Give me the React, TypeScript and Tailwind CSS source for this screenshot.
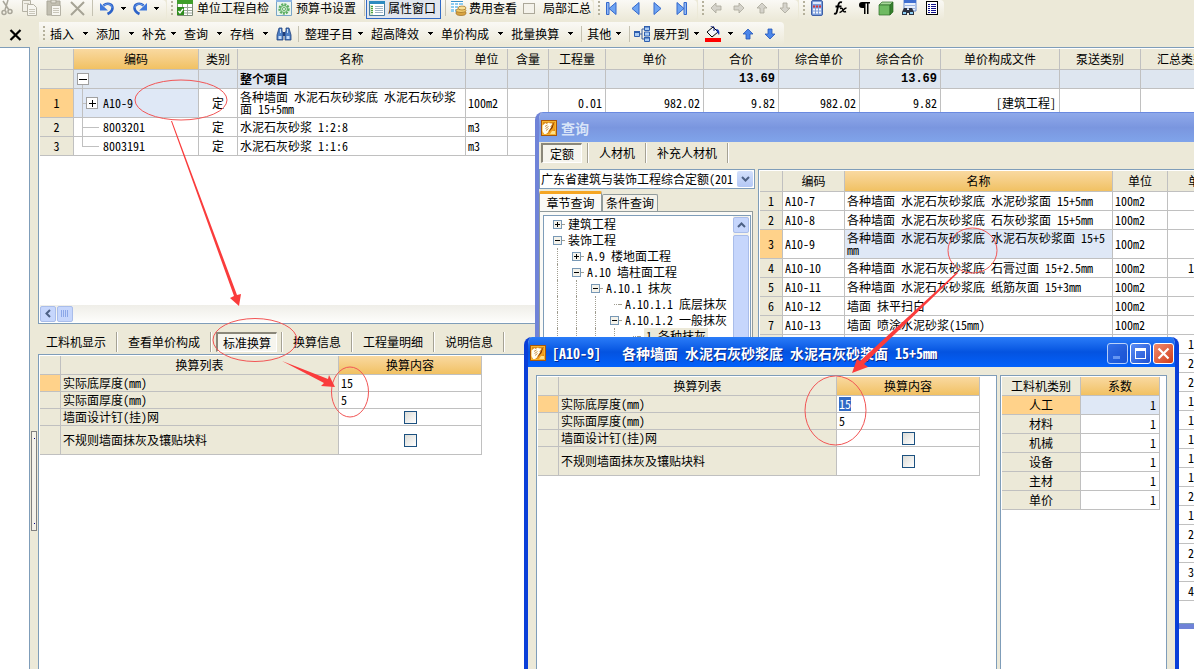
import type { ReactNode } from "react";
import clsx from "clsx";

const PANEL = "border border-[#7f9db9] bg-white";
const HEAD = "border-r border-b border-[#c0c0c0] bg-[#ece9d8] p-0 text-center font-normal whitespace-nowrap";
const HEAD_ACTIVE = "border-r border-b border-[#c0c0c0] bg-linear-to-b from-[#f9d9a0] to-[#f1c162] p-0 text-center font-normal whitespace-nowrap";
const CELL = "border-r border-b border-[#c0c0c0] px-0.5 py-0";

/* ---------- small pieces ---------- */

function Grip() {
    return (
        <svg width="2" height="18" className="shrink-0" shapeRendering="crispEdges">
            <path d="M1 1v16" stroke="#b5b19c" strokeWidth="2" strokeDasharray="2 2" />
        </svg>
    );
}

function Sep() {
    return <span className="h-4 w-px shrink-0 bg-[#c5c2b2]" />;
}

function Caret() {
    return (
        <svg width="5" height="3" className="shrink-0" shapeRendering="crispEdges">
            <path d="M0 0h5v1H0zM1 1h3v1H1zM2 2h1v1H2z" />
        </svg>
    );
}

function Band({ children, className }: { children: ReactNode; className?: string }) {
    return (
        <div className={clsx("flex rounded-r-sm bg-linear-to-b from-[#faf9f5] to-[#ece9d8]", className)}>
            {children}
        </div>
    );
}

function Icon({ children, label }: { children: ReactNode; label?: string }) {
    return (
        <svg width="16" height="16" viewBox="0 0 16 16" className="shrink-0" aria-label={label}>
            {children}
        </svg>
    );
}

function IconButton({ children, label }: { children: ReactNode; label: string }) {
    return (
        <button type="button" title={label} className="shrink-0">
            <Icon>{children}</Icon>
        </button>
    );
}

function Menu({ label, split }: { label: string; split?: boolean }) {
    return (
        <button type="button" className={clsx("flex shrink-0 items-center pr-2", split ? "gap-[9px]" : "gap-[5px]")}>
            {label}
            <Caret />
        </button>
    );
}

function AppIcon() {
    return (
        <Icon>
            <rect width="16" height="16" fill="#a8560a" />
            <rect x="1" y="1" width="14" height="14" fill="#f8b52e" />
            <rect x="2" y="2" width="12" height="12" fill="#d98b1c" />
            <path d="M1.500 5.500L4.500 3l1 1L8 2.500l1 1 1.500-.5.5 1.500L9 7l1.500-.5L9 9l-1 1-1 2.500L5 14H3l-1.500-3z" fill="#fffdf2" />
            <path d="M4 6.500L6.500 5M4.500 8.500l3-2M5 10.500l2.500-2" stroke="#b8741c" strokeWidth="0.800" />
            <path d="M14 1.500L10.500 8 7 14l2 .3L14 9z" fill="#f3a01e" />
            <path d="M13.500 1.500L10 8l-2.500 4.500L11.500 8z" fill="#7a3206" />
            <path d="M11 11h3v3H9z" fill="#ffe08a" />
        </Icon>
    );
}

function Arrow({ turn, color, edge }: { turn: number; color: string; edge: string }) {
    return (
        <g transform={`rotate(${turn} 8 8)`}>
            <path d="M8 3l5 5h-3v5H6V8H3z" fill={color} stroke={edge} strokeWidth="0.8" />
        </g>
    );
}

function Undo() {
    return (
        <>
            <path d="M4.500 5.500C8 2.500 13.500 3.500 13.500 8c0 3-2 4.500-5 6" fill="none" stroke="#2c62c8" strokeWidth="2.600" />
            <path d="M4.500 5.500C8 3 13 3.500 13 8" fill="none" stroke="#6fa0ee" strokeWidth="1" />
            <path d="M1 3v7.500h8z" fill="#3f78dc" />
        </>
    );
}

function NavArrow({ back, end }: { back?: boolean; end?: boolean }) {
    return (
        <g transform={back ? "matrix(-1 0 0 1 16 0)" : undefined}>
            <path d="M4 2.500v12l7-6z" fill="#6ea4f2" stroke="#3468cc" />
            {end && <path d="M11 2.500h2.500v12H11z" fill="#8fb8f5" stroke="#3468cc" />}
        </g>
    );
}

function Binoculars() {
    return (
        <>
            <path d="M3 2h3v3l1 2v7H1V9zM10 2h3l2 7v5H9V7l1-2z" fill="#4d7fc4" stroke="#1f3f7c" strokeWidth="0.8" />
            <path d="M7 6h2v4H7z" fill="#1f3f7c" />
            <path d="M2.500 10h3v3h-3zM10.500 10h3v3h-3zM4 3h1v4H4zM11 3h1v4h-1z" fill="#c4dcf8" />
        </>
    );
}

function ToggleBox({ open }: { open?: boolean }) {
    return (
        <svg width="9" height="9" className="shrink-0" shapeRendering="crispEdges">
            <rect x="0.500" y="0.500" width="8" height="8" fill="#f4f2ea" stroke="#7898b5" />
            <path d={open ? "M2 4.500h5" : "M2 4.500h5M4.500 2v5"} stroke="#000" />
        </svg>
    );
}

function SunkenTab({ label }: { label: string }) {
    return (
        <button
            type="button"
            className="h-5 min-w-[41px] border-t-2 border-l-2 border-r border-b border-t-[#8a877a] border-l-[#8a877a] border-r-white border-b-white bg-[#f6f5ee] px-[5px] leading-4"
        >
            {label}
        </button>
    );
}

function TabSep() {
    return <span className="h-5 w-0.5 border-r border-white bg-[#a5a294]" />;
}

/* ---------- toolbars ---------- */

function TopToolbar() {
    return (
        <div className="flex h-[22px] gap-px overflow-hidden whitespace-nowrap">
            <Band className="h-5 w-[166px] shrink-0 items-start gap-1.5">
                <div className="-ml-0.5 flex gap-2">
                    <IconButton label="剪切">
                        <path d="M5 1l6 9M10 0L7 10" stroke="#a9a69a" strokeWidth="1.500" />
                        <circle cx="6" cy="12.500" r="2" fill="none" stroke="#a9a69a" strokeWidth="1.500" />
                        <circle cx="12" cy="11.500" r="2" fill="none" stroke="#a9a69a" strokeWidth="1.500" />
                    </IconButton>
                    <IconButton label="复制">
                        <path d="M0.500 0.500h8v11h-8z" fill="#f2f0e8" stroke="#b5b2a5" />
                        <path d="M5.500 4.500h6l3 3v8h-9z" fill="#f7f6f0" stroke="#b5b2a5" />
                        <path d="M7 9.500h6M7 11.500h6M7 13.500h6M2 3.500h5" stroke="#c9c6ba" />
                    </IconButton>
                    <IconButton label="粘贴">
                        <path d="M1 1h13v14H1z" fill="#c2bfb1" stroke="#aaa799" />
                        <path d="M5 0h5v3H5z" fill="#e2e0d6" stroke="#aaa799" />
                        <path d="M5.500 5.500h9v10h-9z" fill="#f7f6f0" stroke="#b5b2a5" />
                        <path d="M7 8.500h6M7 10.500h6M7 12.500h6" stroke="#c9c6ba" />
                    </IconButton>
                    <IconButton label="删除">
                        <path d="M1 2l13 13M14 2L1 15" stroke="#a6a395" strokeWidth="2" />
                    </IconButton>
                </div>
                <Sep />
                <IconButton label="撤销"><Undo /></IconButton>
                <span className="flex h-4 items-center"><Caret /></span>
                <IconButton label="重做"><g transform="matrix(-1 0 0 1 16 0)"><Undo /></g></IconButton>
                <span className="flex h-4 items-center"><Caret /></span>
            </Band>

            <Band className="h-5 shrink-0 items-start pr-0.5 pl-1">
                <Grip />
                <button type="button" className="ml-1 flex items-center gap-1 leading-4">
                    <Icon>
                        <path d="M0.500 0.500h15v15H.5z" fill="#fff" stroke="#7d8b78" />
                        <path d="M0 0h16v4H0z" fill="#3f9e2a" />
                        <path d="M1 7.500h14M1 10.500h14M1 13h14M5.500 4v11M10.500 4v11" stroke="#9ba69a" />
                        <path d="M0 7h7v8H0z" fill="#2f8d1e" />
                        <path d="M1.500 11l1.500 2 3-4" fill="none" stroke="#fff" strokeWidth="1.300" />
                    </Icon>
                    单位工程自检
                </button>
                <button type="button" className="ml-[7px] flex items-center gap-1 leading-4">
                    <Icon>
                        <path d="M0.500 0.500h15v15H.5z" fill="#eaf5ee" stroke="#7aa6c8" />
                        <path d="M0 0h16v2H0z" fill="#8fb6e4" />
                        <circle cx="8" cy="9" r="4.500" fill="none" stroke="#5cae62" strokeWidth="2.400" strokeDasharray="2 1" />
                        <circle cx="8" cy="9" r="3.500" fill="#cfead0" stroke="#5cae62" />
                        <circle cx="8" cy="9" r="1.500" fill="#fff" stroke="#5cae62" />
                    </Icon>
                    预算书设置
                </button>
                <span className="ml-2"><span className="block h-4 w-px bg-[#c5c2b2]" /></span>
                <button type="button" className="ml-px flex h-[19px] items-start gap-[3px] border border-t-0 border-[#316ac5] bg-[#e1e6ee] pr-1 pl-0.5 leading-4">
                    <Icon>
                        <path d="M0.500 1.500h15v14H.5z" fill="#fff" stroke="#4b7d9e" />
                        <path d="M0 1h16v3H0z" fill="#2d8bc0" />
                        <path d="M1 5h3v10H1z" fill="#cfe6c8" />
                        <path d="M2 6.500h2M2 8.500h2M2 10.500h2M2 12.500h2" stroke="#4ba13a" />
                        <path d="M6 6.500h8M6 8.500h8M6 10.500h8M6 12.500h8" stroke="#9fb4c4" />
                    </Icon>
                    属性窗口
                </button>
                <span className="ml-1"><span className="block h-4 w-px bg-[#c5c2b2]" /></span>
                <button type="button" className="ml-[5px] flex items-center gap-0.5 leading-4">
                    <Icon>
                        <path d="M0 1h12v11H0z" fill="#8fcdf0" />
                        <path d="M0 2.500h12M0 5.500h12M0 8.500h12M3.500 1v11M7.500 1v11" stroke="#fff" />
                        <path d="M0 1h12v1H0z" fill="#3a92cc" />
                        <ellipse cx="10" cy="13" rx="5" ry="2.500" fill="#d9a441" stroke="#9c6b1c" strokeWidth="0.7" />
                        <ellipse cx="10" cy="10.500" rx="5" ry="2" fill="#f3cd6e" stroke="#9c6b1c" strokeWidth="0.7" />
                        <ellipse cx="11" cy="8" rx="4" ry="2" fill="#f9df96" stroke="#9c6b1c" strokeWidth="0.7" />
                    </Icon>
                    费用查看
                </button>
                <label className="ml-1.5 flex items-center gap-2 leading-4">
                    <input type="checkbox" className="h-[11px] w-3 appearance-none border border-[#aca899] bg-[#f4f2ea]" />
                    局部汇总
                </label>
            </Band>

            <Band className="h-5 w-[103px] shrink-0 items-start pl-1">
                <Grip />
                <div className="ml-1 flex gap-[7px]">
                    <IconButton label="首条"><NavArrow back end /></IconButton>
                    <IconButton label="上一条"><NavArrow back /></IconButton>
                    <IconButton label="下一条"><NavArrow /></IconButton>
                    <IconButton label="末条"><NavArrow end /></IconButton>
                </div>
            </Band>

            <Band className="h-5 w-[100px] shrink-0 items-start pl-1">
                <Grip />
                <div className="ml-1 flex gap-[7px]">
                    <IconButton label="左移"><Arrow turn={-90} color="#d5d3cb" edge="#aaa79b" /></IconButton>
                    <IconButton label="右移"><Arrow turn={90} color="#d5d3cb" edge="#aaa79b" /></IconButton>
                    <IconButton label="上移"><Arrow turn={0} color="#d5d3cb" edge="#aaa79b" /></IconButton>
                    <IconButton label="下移"><Arrow turn={180} color="#d5d3cb" edge="#aaa79b" /></IconButton>
                </div>
            </Band>

            <Band className="h-5 shrink-0 items-start pr-1 pl-1">
                <Grip />
                <div className="ml-1 flex gap-[7px]">
                    <IconButton label="计算器">
                        <rect x="2.500" y="0.500" width="11" height="15" rx="1.500" fill="#7d9edb" stroke="#3d5fa6" />
                        <path d="M4 2h8v2H4z" fill="#dfeafc" />
                        <path d="M4 6.500h8" stroke="#d93636" strokeWidth="2" strokeDasharray="2 1" />
                        <path d="M4 9.500h8M4 12.500h8" stroke="#f3f6fd" strokeWidth="2" strokeDasharray="2 1" />
                    </IconButton>
                    <IconButton label="函数">
                        <path d="M2 13.500c2 .8 2.600-.5 3-2.500l1.300-6C6.800 2.500 8 1.700 10 2.300M3.500 6.500h6" fill="none" stroke="#000" strokeWidth="1.800" />
                        <path d="M8 8.500c2-.8 2.500 0 3 1.500s1 2.500 3 1.500M14.500 8c-2.500 0-4.500 4.500-7 4.500" fill="none" stroke="#000" strokeWidth="1.400" />
                    </IconButton>
                    <IconButton label="段落标记">
                        <path d="M7 2h8v1.500h-1.500V14H12V3.500h-1.500V14H9V8H7a3 3 0 010-6z" />
                    </IconButton>
                    <IconButton label="立方体">
                        <path d="M1 5l3-3h11l-3 3z" fill="#a8d79a" stroke="#2d6b26" strokeWidth="0.7" />
                        <path d="M1 5h11v10H1z" fill="#6fba62" stroke="#2d6b26" strokeWidth="0.7" />
                        <path d="M12 5l3-3v10l-3 3z" fill="#357f2c" stroke="#2d6b26" strokeWidth="0.7" />
                    </IconButton>
                    <IconButton label="查找表格">
                        <path d="M3 0h12v11H3z" fill="#e7effb" stroke="#6c8fce" />
                        <path d="M3 0h12v3H3z" fill="#3f6fd0" />
                        <path d="M4 5.500h10M4 8.500h10" stroke="#9db7e2" />
                        <path d="M3 8h3v2h2V8h3l2 4v3H8v-2H6v2H1v-3z" fill="#2b3242" />
                        <path d="M2 12h3v2H2zM9 12h3v2H9z" fill="#8fd0f5" />
                    </IconButton>
                    <IconButton label="清单">
                        <g shapeRendering="crispEdges">
                            <path d="M2.500 1.500h11v13h-11z" fill="#fff" stroke="#000" />
                            <path d="M4 4.500h2M4 6.500h2M4 8.500h2M4 10.500h2M4 12.500h2M7 4.500h5M7 6.500h5M7 8.500h5M7 10.500h5M7 12.500h5" stroke="#10108a" />
                        </g>
                    </IconButton>
                </div>
            </Band>
        </div>
    );
}

function EditToolbar() {
    return (
        <div className="flex h-[25px] whitespace-nowrap">
            <div className="flex w-[39px] shrink-0 items-center pl-2">
                <IconButton label="关闭">
                    <path d="M2.500 3l10 10M12.500 3l-10 10" stroke="#000" strokeWidth="2.200" />
                </IconButton>
            </div>
            <Band className="h-[23px] shrink-0 items-center pr-1.5 pl-1">
                <Grip />
                <div className="ml-[5px] flex items-center">
                    <Menu label="插入" split />
                    <Menu label="添加" split />
                    <Menu label="补充" />
                    <Menu label="查询" split />
                    <Menu label="存档" split />
                    <IconButton label="查找"><Binoculars /></IconButton>
                </div>
                <span className="mx-1.5 flex"><Sep /></span>
                <Menu label="整理子目" />
                <Menu label="超高降效" split />
                <Menu label="单价构成" split />
                <Menu label="批量换算" split />
                <Sep />
                <span className="ml-[5px] flex"><Menu label="其他" /></span>
                <Sep />
                <button type="button" className="ml-1 flex items-center gap-[3px]">
                    <Icon>
                        <path d="M5 8h3M8 3v10M8 3h2M8 13h2" stroke="#3b5d99" fill="none" />
                        <path d="M0.500 5.500h5v5h-5zM10.500 0.500h5v4h-5zM10.500 6h5v4h-5zM10.500 11.500h5v4h-5z" fill="#a9cbf4" stroke="#2f5fae" />
                        <path d="M0 5h6v2H0zM10 0h6v1.500h-6zM10 11h6v1.500h-6z" fill="#2f5fae" />
                    </Icon>
                    展开到
                    <span className="ml-0.5"><Caret /></span>
                </button>
                <button type="button" title="填充颜色" className="ml-1.5 flex items-center gap-[7px]">
                    <Icon>
                        <path d="M2 6l6-5 5 5-6 5z" fill="#f3f6fa" stroke="#000" />
                        <path d="M6 1c0-1.500 3-1.500 3 1v3" fill="none" stroke="#0a1d80" />
                        <path d="M11 3c3 0 4 3 3 6l-2-3z" fill="#1537b5" />
                        <path d="M0 12h16v4H0z" fill="#f00" />
                    </Icon>
                    <Caret />
                </button>
                <span className="ml-[7px] flex gap-1.5">
                    <IconButton label="升级"><Arrow turn={0} color="#4b86ea" edge="#2456b8" /></IconButton>
                    <IconButton label="降级"><Arrow turn={180} color="#4b86ea" edge="#2456b8" /></IconButton>
                </span>
            </Band>
        </div>
    );
}

/* ---------- main grid ---------- */

const columns = ["编码", "类别", "名称", "单位", "含量", "工程量", "单价", "合价", "综合单价", "综合合价", "单价构成文件", "泵送类别", "汇总类别"];

interface Item {
    code: string;
    kind: string;
    name: string;
    unit: string;
    qty?: string;
    price?: string;
    total?: string;
    unitPrice?: string;
    unitTotal?: string;
    file?: string;
}

const items: Item[] = [
    { code: "A10-9", kind: "定", name: "各种墙面 水泥石灰砂浆底 水泥石灰砂浆面 15+5mm", unit: "100m2", qty: "0.01", price: "982.02", total: "9.82", unitPrice: "982.02", unitTotal: "9.82", file: "[建筑工程]" },
    { code: "8003201", kind: "定", name: "水泥石灰砂浆 1:2:8", unit: "m3" },
    { code: "8003191", kind: "定", name: "水泥石灰砂浆 1:1:6", unit: "m3" },
];

function MainGrid() {
    const num = clsx(CELL, "pr-[3px] text-right");
    const sum = clsx(num, "font-['Liberation_Mono',monospace]");
    return (
        <table className="w-[1182px] table-fixed border-separate border-spacing-0 leading-3">
            <colgroup>
                <col className="w-[34px]" />
                <col className="w-[125px]" />
                <col className="w-[39px]" />
                <col className="w-[228px]" />
                <col className="w-[42px]" />
                <col className="w-[41px]" />
                <col className="w-[57px]" />
                <col className="w-[98px]" />
                <col className="w-[75px]" />
                <col className="w-[81px]" />
                <col className="w-[81px]" />
                <col className="w-[119px]" />
                <col className="w-[81px]" />
                <col className="w-[81px]" />
            </colgroup>
            <thead>
                <tr className="h-[21px]">
                    <th className={HEAD} />
                    {columns.map((c, i) => (
                        <th key={c} className={i === 0 ? HEAD_ACTIVE : HEAD}>{c}</th>
                    ))}
                </tr>
            </thead>
            <tbody>
                <tr className="h-[19px] bg-[#dee6f0] font-bold">
                    <td className={clsx(CELL, "bg-[#ece9d8]")} />
                    <td className="border-r border-b border-[#c0c0c0] p-0">
                        <svg width="29" height="18" className="block" shapeRendering="crispEdges">
                            <rect x="3.500" y="3.500" width="11" height="11" fill="#fff" stroke="#a0a0a0" />
                            <path d="M5 9.500h8" stroke="#000" />
                            <path d="M8.500 15v3" stroke="#c0c0c0" />
                        </svg>
                    </td>
                    <td className={CELL} />
                    <td className={CELL}>整个项目</td>
                    <td className={CELL} />
                    <td className={CELL} />
                    <td className={CELL} />
                    <td className={CELL} />
                    <td className={sum}>13.69</td>
                    <td className={CELL} />
                    <td className={sum}>13.69</td>
                    <td className={CELL} />
                    <td className={CELL} />
                    <td className={CELL} />
                </tr>
                {items.map((it, i) => (
                    <tr key={it.code} className={i === 0 ? "h-[29px]" : "h-[19px]"}>
                        <td className={clsx(CELL, "text-center", i === 0 ? "bg-[#ffd28a]" : "bg-[#ece9d8]")}>{i + 1}</td>
                        <td className={clsx("border-r border-b border-[#c0c0c0] p-0", i === 0 && "bg-[#dfe8f6]")}>
                            <div className="flex items-center">
                                <svg width="29" height={i === 0 ? 28 : 18} className="block shrink-0" shapeRendering="crispEdges">
                                    {i === 0 && (
                                        <>
                                            <path d="M8.500 0v28M9 14.500h4" stroke="#c0c0c0" />
                                            <rect x="12.500" y="8.500" width="11" height="11" fill="#fff" stroke="#a0a0a0" />
                                            <path d="M15 14.500h7M18.500 11v7" stroke="#000" />
                                        </>
                                    )}
                                    {i === 1 && <path d="M8.500 0v18M9 9.500h16" stroke="#c0c0c0" />}
                                    {i === 2 && <path d="M8.500 0v9.500h16" fill="none" stroke="#c0c0c0" />}
                                </svg>
                                {it.code}
                            </div>
                        </td>
                        <td className={clsx(CELL, "text-center")}>{it.kind}</td>
                        <td className={clsx(CELL, "break-all")}>{it.name}</td>
                        <td className={CELL}>{it.unit}</td>
                        <td className={CELL} />
                        <td className={num}>{it.qty}</td>
                        <td className={num}>{it.price}</td>
                        <td className={num}>{it.total}</td>
                        <td className={num}>{it.unitPrice}</td>
                        <td className={num}>{it.unitTotal}</td>
                        <td className={num}>{it.file}</td>
                        <td className={CELL} />
                        <td className={CELL} />
                    </tr>
                ))}
            </tbody>
        </table>
    );
}

/* ---------- conversion table, shared by the lower pane and the dialog ---------- */

const conversions = [
    { name: "实际底厚度(mm)", value: "15" },
    { name: "实际面厚度(mm)", value: "5" },
    { name: "墙面设计钉(挂)网" },
    { name: "不规则墙面抹灰及镶贴块料" },
];

function ConversionTable({ editing }: { editing?: boolean }) {
    return (
        <table className="w-[442px] table-fixed border-separate border-spacing-0 leading-3">
            <colgroup>
                <col className="w-[21px]" />
                <col className="w-[278px]" />
                <col className="w-[143px]" />
            </colgroup>
            <thead>
                <tr className="h-[19px]">
                    <th className={HEAD} />
                    <th className={HEAD}>换算列表</th>
                    <th className={HEAD_ACTIVE}>换算内容</th>
                </tr>
            </thead>
            <tbody>
                {conversions.map((c, i) => (
                    <tr key={c.name} className={i === 3 ? "h-[29px]" : "h-[17px]"}>
                        <td className={clsx(CELL, i === 0 ? "bg-[#ffd28a]" : "bg-[#ece9d8]")} />
                        <td className={clsx(CELL, "bg-[#ece9d8]")}>{c.name}</td>
                        <td className={clsx(CELL, !c.value && "text-center")}>
                            {c.value ? (
                                <input
                                    aria-label={c.name}
                                    defaultValue={c.value}
                                    className={clsx("block h-3.5 leading-[14px] outline-none", editing && i === 0 ? "w-3 bg-[#316ac5] text-white" : "w-32")}
                                />
                            ) : (
                                <input
                                    type="checkbox"
                                    aria-label={c.name}
                                    className="mx-auto block h-[13px] w-[13px] appearance-none border border-[#1c5180] bg-linear-to-br from-[#dcdcd7] to-white"
                                />
                            )}
                        </td>
                    </tr>
                ))}
            </tbody>
        </table>
    );
}

/* ---------- query window ---------- */

const tree = [
    { depth: 0, label: "建筑工程", box: "plus" },
    { depth: 0, label: "装饰工程", box: "minus" },
    { depth: 1, label: "A.9 楼地面工程", box: "plus" },
    { depth: 1, label: "A.10 墙柱面工程", box: "minus" },
    { depth: 2, label: "A.10.1 抹灰", box: "minus" },
    { depth: 3, label: "A.10.1.1 底层抹灰" },
    { depth: 3, label: "A.10.1.2 一般抹灰", box: "minus" },
    { depth: 4, label: "1 各种抹灰", selected: true },
];

const norms = [
    ["A10-7", "各种墙面 水泥石灰砂浆底 水泥砂浆面 15+5mm", ""],
    ["A10-8", "各种墙面 水泥石灰砂浆底 石灰砂浆面 15+5mm", ""],
    ["A10-9", "各种墙面 水泥石灰砂浆底 水泥石灰砂浆面 15+5mm", ""],
    ["A10-10", "各种墙面 水泥石灰砂浆底 石膏过面 15+2.5mm", "1"],
    ["A10-11", "各种墙面 水泥石灰砂浆底 纸筋灰面 15+3mm", ""],
    ["A10-12", "墙面 抹平扫白", ""],
    ["A10-13", "墙面 喷涂水泥砂浆(15mm)", ""],
    ...["1", "2", "2", "1", "1", "1", "1", "1", "2", "1", "2", "2", "3", "4"].map((n) => ["", "", n]),
];

function QueryWindow() {
    return (
        <div className="absolute top-[112px] right-0 left-[535px] flex h-[517px] flex-col overflow-hidden rounded-tl-lg border-b-[5px] border-l-4 border-[#6f83d8] bg-[#ece9d8]">
            <div className="flex h-[30px] shrink-0 items-center gap-1 border-t border-[#6a8ae0] bg-linear-to-b from-[#8fa9ea] via-[#7a96df] to-[#80a4ea] pl-0.5 text-sm leading-4 font-bold text-[#d8e4f8]">
                <AppIcon />
                查询
            </div>
            <div className="flex h-[27px] shrink-0 items-start pt-px pl-0.5">
                <SunkenTab label="定额" />
                <span className="ml-[5px] flex"><TabSep /></span>
                <button type="button" className="h-5 px-2.5">人材机</button>
                <TabSep />
                <button type="button" className="h-5 px-2.5">补充人材机</button>
                <TabSep />
            </div>
            <div className="flex min-h-0 flex-1 gap-[3px]">
                <div className="flex w-[216px] shrink-0 flex-col">
                    <div className="flex h-5 shrink-0 border border-[#7f9db9] bg-white">
                        <select aria-label="定额库" className="mr-1 min-w-0 flex-1 appearance-none overflow-hidden pl-px leading-4 whitespace-nowrap outline-none">
                            <option>广东省建筑与装饰工程综合定额(2010)</option>
                        </select>
                        <span className="my-px mr-px flex w-4 items-center justify-center rounded-xs bg-linear-to-b from-[#d3e0fb] to-[#b4c8f5]">
                            <svg width="9" height="6"><path d="M1 1l3.500 3.500L8 1" fill="none" stroke="#4d6185" strokeWidth="2" /></svg>
                        </span>
                    </div>
                    <div className="mt-0.5 flex shrink-0 items-end">
                        <button type="button" className="h-5 w-[63px] rounded-t-xs border-t-[3px] border-r border-l border-[#919b9c] border-t-[#f5a623] bg-[#fbfaf6] leading-4">章节查询</button>
                        <button type="button" className="h-[17px] w-14 rounded-t-xs border border-b-0 border-[#919b9c] bg-[#f4f2ea] leading-4">条件查询</button>
                    </div>
                    <div className="mr-0.5 flex min-h-0 flex-1 border border-[#919b9c] bg-[#fbfaf6] pt-[3px] pr-px pl-[3px]">
                        <div className={clsx(PANEL, "flex min-w-0 flex-1 overflow-hidden pr-px")}>
                            <ul className="min-w-0 flex-1 overflow-hidden pl-[9px] leading-4 whitespace-nowrap">
                                {tree.map((node) => (
                                    <li key={node.label} className="flex h-4 items-center">
                                        {Array.from({ length: node.depth }, (_, i) => (
                                            <span key={i} className="h-4 w-[19px] shrink-0 pl-1">
                                                <span className="block h-4 border-l border-dotted border-[#a09d90]" />
                                            </span>
                                        ))}
                                        {node.box ? <ToggleBox open={node.box === "minus"} /> : <span className="ml-1 w-[5px] shrink-0 border-t border-dotted border-[#a09d90]" />}
                                        <span className="mr-1 w-0.5 shrink-0 border-t border-dotted border-[#a09d90]" />
                                        <span className={clsx(node.selected && "bg-[#ece9d8] px-0.5")}>{node.label}</span>
                                    </li>
                                ))}
                            </ul>
                            <div className="flex w-4 shrink-0 flex-col gap-0.5 bg-[#f3f2ec] pt-px">
                                <button type="button" title="向上滚动" className="flex h-4 items-center justify-center rounded-xs border border-[#a9bdea] bg-[#c6d6fc]">
                                    <svg width="9" height="6"><path d="M1 5l3.500-3.500L8 5" fill="none" stroke="#4d6185" strokeWidth="2" /></svg>
                                </button>
                                <span className="flex-1 rounded-xs border border-[#a9bdea] bg-[#c6d6fc]" />
                            </div>
                        </div>
                    </div>
                </div>
                <div className={clsx(PANEL, "min-w-0 flex-1 overflow-hidden border-r-0 p-px pr-0")}>
                    <table className="w-[473px] table-fixed border-separate border-spacing-0 leading-3">
                        <colgroup>
                            <col className="w-[23px]" />
                            <col className="w-[62px]" />
                            <col className="w-[268px]" />
                            <col className="w-[55px]" />
                            <col className="w-[65px]" />
                        </colgroup>
                        <thead>
                            <tr className="h-[21px]">
                                <th className={HEAD} />
                                <th className={HEAD}>编码</th>
                                <th className={HEAD_ACTIVE}>名称</th>
                                <th className={HEAD}>单位</th>
                                <th className={HEAD}>单价</th>
                            </tr>
                        </thead>
                        <tbody>
                            {norms.map(([code, name, price], i) => (
                                <tr key={i} className={i === 2 ? "h-[29px]" : "h-[19px]"}>
                                    <td className={clsx(CELL, "text-center", i === 2 ? "bg-[#ffd28a]" : "bg-[#ece9d8]")}>{code && i + 1}</td>
                                    <td className={CELL}>{code}</td>
                                    <td className={clsx(CELL, "break-all", i === 2 && "bg-[#dfe8f6]")}>{name}</td>
                                    <td className={CELL}>{code && "100m2"}</td>
                                    <td className={clsx(CELL, "pl-5")}>{price}</td>
                                </tr>
                            ))}
                        </tbody>
                    </table>
                </div>
            </div>
        </div>
    );
}

/* ---------- conversion dialog ---------- */

const factors = ["人工", "材料", "机械", "设备", "主材", "单价"];

function ConversionDialog() {
    const box = "flex h-[21px] w-[21px] items-center justify-center rounded-[3px] border border-white";
    return (
        <div className="absolute top-[337px] bottom-0 left-[524px] flex w-[655px] flex-col overflow-hidden rounded-t-lg border-x-4 border-[#0a3fd8] bg-[#ece9d8]">
            <div className="-mx-1 flex h-[30px] shrink-0 items-center bg-linear-to-b from-[#2a7cf8] via-[#0453e0] to-[#0361fb] pt-0.5 pr-[5px] pl-1.5 text-sm font-bold text-white">
                <AppIcon />
                <h2 className="ml-1.5 flex-1 whitespace-pre [text-shadow:1px_1px_#0a2a8a]">{"[A10-9]   各种墙面 水泥石灰砂浆底 水泥石灰砂浆面 15+5mm"}</h2>
                <div className="flex gap-0.5">
                    <button type="button" title="最小化" className={clsx(box, "bg-linear-to-br from-[#3f74e8] to-[#2350c8] opacity-70")}>
                        <svg width="13" height="13"><path d="M2 9h7v3H2z" fill="#8fb0f5" /></svg>
                    </button>
                    <button type="button" title="最大化" className={clsx(box, "bg-linear-to-br from-[#5a8cf5] to-[#1f50d0]")}>
                        <svg width="13" height="13" shapeRendering="crispEdges"><path d="M1.500 2.500h10v9h-10z" fill="none" stroke="#fff" /><path d="M1 1h11v3H1z" fill="#fff" /></svg>
                    </button>
                    <button type="button" title="关闭" className={clsx(box, "bg-linear-to-br from-[#f08a6c] to-[#cf3a14]")}>
                        <svg width="13" height="13"><path d="M1.500 1.500l10 10M11.500 1.500l-10 10" stroke="#fff" strokeWidth="2.200" /></svg>
                    </button>
                </div>
            </div>
            <div className="flex flex-1 gap-[3px] px-2 pt-2">
                <div className={clsx(PANEL, "min-w-0 flex-1 border-b-0 p-px")}>
                    <ConversionTable editing />
                </div>
                <div className={clsx(PANEL, "w-[167px] shrink-0 border-b-0 p-px")}>
                    <table className="w-[158px] table-fixed border-separate border-spacing-0 leading-3">
                        <thead>
                            <tr className="h-[19px]">
                                <th className={HEAD}>工料机类别</th>
                                <th className={HEAD_ACTIVE}>系数</th>
                            </tr>
                        </thead>
                        <tbody>
                            {factors.map((f, i) => (
                                <tr key={f} className="h-[19px]">
                                    <th className={clsx(CELL, "text-center font-normal", i === 0 ? "bg-[#ffd28a]" : "bg-[#ece9d8]")}>{f}</th>
                                    <td className={clsx(CELL, "pr-[3px] text-right", i === 0 && "bg-[#dfe8f6]")}>1</td>
                                </tr>
                            ))}
                        </tbody>
                    </table>
                </div>
            </div>
        </div>
    );
}

/* ---------- red pen marks ---------- */

function Marks() {
    return (
        <svg className="pointer-events-none absolute inset-0 h-full w-full" fill="none" stroke="#f25555" strokeWidth="1">
            <ellipse cx="181" cy="100" rx="46" ry="20" />
            <ellipse cx="255" cy="340" rx="42" ry="21.500" />
            <ellipse cx="350" cy="392" rx="18.500" ry="25" />
            <ellipse cx="972.500" cy="250.500" rx="24.500" ry="22.500" />
            <ellipse cx="835.500" cy="410.500" rx="30.500" ry="34.500" />
            <g fill="#fa3c3c" stroke="none">
                <path d="M171 121l1 0 65 174 4-1-2 12-9-8 4-2z" />
                <path d="M282 361l46 18 1-4 6 12-14-1 3-3z" />
                <path d="M957 272l1 1-94 91 4 3-16 6 5-14 3 2z" />
            </g>
        </svg>
    );
}

export default function App() {
    return (
        <div className="relative flex h-screen flex-col overflow-hidden bg-[#ece9d8] font-['Noto_Sans_Mono_CJK_SC','Noto_Sans_CJK_SC',monospace] text-xs text-black">
            <TopToolbar />
            <EditToolbar />

            <div className="flex min-h-0 flex-1">
                <aside className="w-[30px] shrink-0 border-t border-r border-[#7f9db9] bg-white" />
                <div className="w-2 shrink-0 px-px pt-[384px]">
                    <div className="flex h-[100px] flex-col items-center justify-between border border-[#808080] bg-[#f4f2ea] py-1.5">
                        <span className="h-px w-px bg-[#000080]" />
                        <span className="h-px w-px bg-[#000080]" />
                    </div>
                </div>
                <main className="flex min-w-0 flex-1 flex-col">
                    <section className={clsx(PANEL, "flex h-[277px] shrink-0 flex-col justify-between border-r-0 p-px pr-0")}>
                        <div className="overflow-hidden">
                            <MainGrid />
                        </div>
                        <div className="flex h-[17px] items-center gap-px bg-linear-to-b from-[#efeee8] to-[#fdfdfb]">
                            <button type="button" title="向左滚动" className="flex h-4 w-4 items-center justify-center rounded-xs border border-[#a9bdea] bg-[#c6d6fc]">
                                <svg width="6" height="9"><path d="M5 1L1.500 4.500 5 8" fill="none" stroke="#4d6185" strokeWidth="2" /></svg>
                            </button>
                            <span className="flex h-4 w-4 items-center justify-center rounded-xs border border-[#a9bdea] bg-[#c6d6fc]">
                                <svg width="8" height="7" shapeRendering="crispEdges"><path d="M.5 0v7M2.500 0v7M4.500 0v7M6.500 0v7" stroke="#8ba7e8" /></svg>
                            </span>
                        </div>
                    </section>

                    <nav className="flex h-[30px] shrink-0 items-end pb-0.5 pl-2 whitespace-nowrap">
                        <button type="button" className="h-5 pr-2.5">工料机显示</button>
                        <TabSep />
                        <button type="button" className="h-5 px-2.5">查看单价构成</button>
                        <TabSep />
                        <span className="mx-1 flex"><SunkenTab label="标准换算" /></span>
                        <TabSep />
                        <button type="button" className="h-5 px-2.5">换算信息</button>
                        <TabSep />
                        <button type="button" className="h-5 px-2.5">工程量明细</button>
                        <TabSep />
                        <button type="button" className="h-5 px-2.5">说明信息</button>
                        <TabSep />
                    </nav>

                    <section className={clsx(PANEL, "flex-1 border-r-0 border-b-0 p-px")}>
                        <ConversionTable />
                    </section>
                </main>
            </div>

            <QueryWindow />
            <ConversionDialog />
            <Marks />
        </div>
    );
}
